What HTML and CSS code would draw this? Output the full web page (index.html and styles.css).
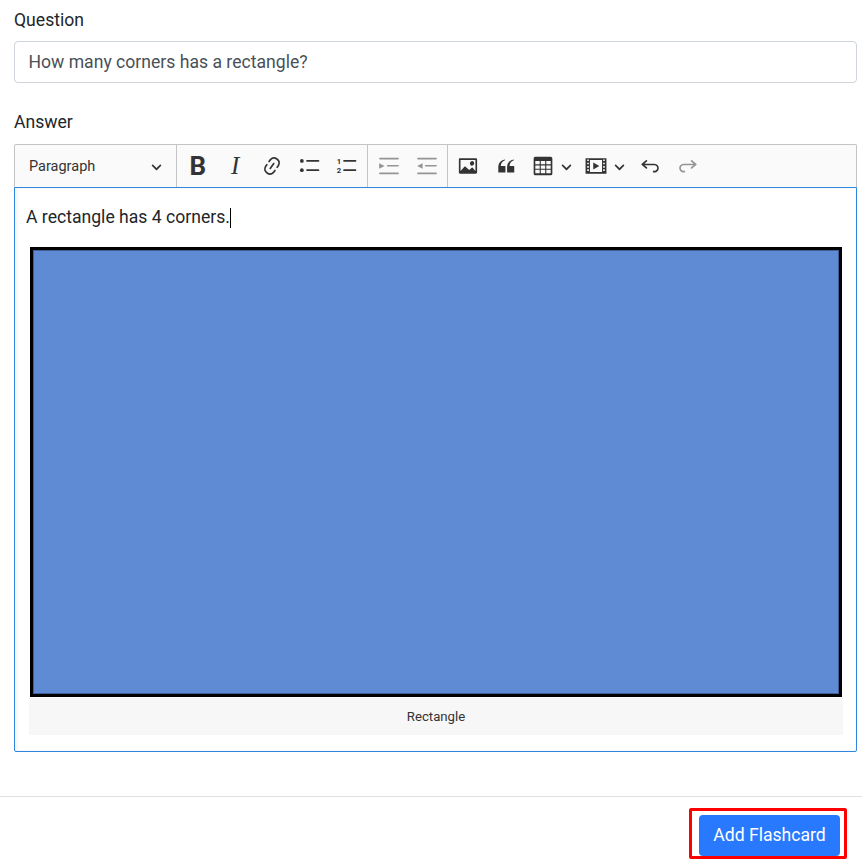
FILE: index.html
```html
<!DOCTYPE html>
<html lang="en">
<head>
    <meta charset="UTF-8">
    <meta name="viewport" content="width=device-width, initial-scale=1.0">
    <title>Add Flashcard</title>
    <link rel="stylesheet" href="styles.css">
</head>
<body>
    <form class="card-form">
        <div class="field">
            <label class="field-label" for="question">Question</label>
            <input class="text-input" type="text" id="question" value="How many corners has a rectangle?">
        </div>
        <div class="field">
            <span class="field-label">Answer</span>
            <div class="toolbar">
                <div class="heading-select">
                    <span>Paragraph</span>
                    <svg class="arrow" viewBox="0 0 10 10"><path d="M.941 4.523a.75.75 0 1 1 1.06-1.06l3.006 3.005 3.005-3.005a.75.75 0 1 1 1.06 1.06l-3.549 3.55a.75.75 0 0 1-1.062 0L.941 4.523z"/></svg>
                </div>
                <div class="tool-group">
                    <span class="tool tool-bold">B</span>
                    <span class="tool tool-italic">I</span>
                    <span class="tool">
                        <svg class="icon" viewBox="0 0 20 20"><path d="m11.077 15 .991-1.416a.75.75 0 1 1 1.229.86l-1.148 1.64a.748.748 0 0 1-.217.206 5.251 5.251 0 0 1-8.503-5.955.741.741 0 0 1 .12-.274l1.147-1.639a.75.75 0 1 1 1.228.86L4.933 10.7l.006.003a3.75 3.75 0 0 0 6.132 4.294l.006.004zm5.494-5.335a.748.748 0 0 1-.12.274l-1.147 1.639a.75.75 0 1 1-1.228-.86l.86-1.23a3.75 3.75 0 0 0-6.144-4.301l-.86 1.229a.75.75 0 0 1-1.229-.86l1.148-1.64a.748.748 0 0 1 .217-.206 5.251 5.251 0 0 1 8.503 5.955zm-4.563-2.532a.75.75 0 0 1 .184 1.045l-3.155 4.505a.75.75 0 1 1-1.229-.86l3.155-4.506a.75.75 0 0 1 1.045-.184z"/></svg>
                    </span>
                    <span class="tool">
                        <svg class="icon" viewBox="0 0 20 20"><circle cx="2.600" cy="5.400" r="1.700"/><circle cx="2.600" cy="13.800" r="1.700"/><rect x="6.500" y="4.600" width="12" height="1.500" rx=".75"/><rect x="6.500" y="13" width="12" height="1.500" rx=".75"/></svg>
                    </span>
                    <span class="tool">
                        <svg class="icon" viewBox="0 0 20 20"><text class="list-num" x="2.800" y="7.800">1</text><text class="list-num" x="2.800" y="16.600">2</text><rect x="6.500" y="4.600" width="12" height="1.500" rx=".75"/><rect x="6.500" y="13" width="12" height="1.500" rx=".75"/></svg>
                    </span>
                </div>
                <div class="tool-group">
                    <span class="tool tool-off">
                        <svg class="icon" viewBox="0 0 20 20"><rect x="1" y="2.500" width="18" height="1.500" rx=".75"/><rect x="8" y="9" width="11" height="1.500" rx=".75"/><rect x="1" y="16" width="18" height="1.500" rx=".75"/><path d="M1 7.500l5 2.500-5 2.500z"/></svg>
                    </span>
                    <span class="tool tool-off">
                        <svg class="icon" viewBox="0 0 20 20"><rect x="1" y="2.500" width="18" height="1.500" rx=".75"/><rect x="8" y="9" width="11" height="1.500" rx=".75"/><rect x="1" y="16" width="18" height="1.500" rx=".75"/><path d="M6 7.500l-5 2.500 5 2.500z"/></svg>
                    </span>
                </div>
                <div class="tool-group tool-group-last">
                    <span class="tool">
                        <svg class="icon" viewBox="0 0 20 20"><path d="M6.91 10.54c.26-.23.64-.21.88.03l3.36 3.14 2.23-2.06a.64.64 0 0 1 .87 0l2.52 2.97V4.5H3.2v10.12l3.71-4.08zm10.27-7.51c.6 0 1.09.47 1.09 1.05v11.84c0 .59-.49 1.06-1.09 1.06H2.79c-.6 0-1.09-.47-1.09-1.06V4.08c0-.58.49-1.05 1.1-1.05h14.38zm-5.22 5.56a1.96 1.96 0 1 1 3.4-1.96 1.96 1.96 0 0 1-3.4 1.96z"/></svg>
                    </span>
                    <span class="tool">
                        <svg class="icon" viewBox="0 0 20 20"><path d="M3 10.423a6.5 6.5 0 0 1 6.056-6.408l.038.67C6.448 5.423 5.354 7.663 5.22 10H9c.552 0 .5.432.5.986v4.511c0 .554-.448.503-1 .503h-5c-.552 0-.5-.449-.5-1.003v-4.574zm8 0a6.5 6.5 0 0 1 6.056-6.408l.038.67c-2.646.739-3.74 2.979-3.873 5.315H17c.552 0 .5.432.5.986v4.511c0 .554-.448.503-1 .503h-5c-.552 0-.5-.449-.5-1.003v-4.574z"/></svg>
                    </span>
                    <span class="tool tool-split">
                        <svg class="icon" viewBox="0 0 20 20"><path fill-rule="evenodd" d="M3 1.500h14A1.500 1.500 0 0 1 18.500 3v14a1.500 1.500 0 0 1-1.500 1.500H3A1.500 1.500 0 0 1 1.500 17V3A1.500 1.500 0 0 1 3 1.500zM3 5.500v3h4v-3H3zm5 0v3h4v-3H8zm5 0v3h4v-3h-4zM3 9.500v3h4v-3H3zm5 0v3h4v-3H8zm5 0v3h4v-3h-4zM3 13.500v3h4v-3H3zm5 0v3h4v-3H8zm5 0v3h4v-3h-4z"/></svg>
                        <svg class="arrow" viewBox="0 0 10 10"><path d="M.941 4.523a.75.75 0 1 1 1.06-1.06l3.006 3.005 3.005-3.005a.75.75 0 1 1 1.06 1.06l-3.549 3.55a.75.75 0 0 1-1.062 0L.941 4.523z"/></svg>
                    </span>
                    <span class="tool tool-split tool-split-media">
                        <svg class="icon" viewBox="0 0 20 20"><path fill-rule="evenodd" d="M.500 3h19v14H.500V3zM2 4v1.500h1.500V4H2zm0 3v1.500h1.500V7H2zm0 3v1.500h1.500V10H2zm0 3v1.500h1.500V13H2zm14.500-9v1.500H18V4h-1.500zm0 3v1.500H18V7h-1.500zm0 3v1.500H18V10h-1.500zm0 3v1.500H18V13h-1.500zM4.500 4.500v11h11v-11h-11zM7.500 6.800l5.500 3.200-5.500 3.200V6.800z"/></svg>
                        <svg class="arrow" viewBox="0 0 10 10"><path d="M.941 4.523a.75.75 0 1 1 1.06-1.06l3.006 3.005 3.005-3.005a.75.75 0 1 1 1.06 1.06l-3.549 3.55a.75.75 0 0 1-1.062 0L.941 4.523z"/></svg>
                    </span>
                    <span class="tool">
                        <svg class="icon" viewBox="0 0 20 20"><path d="m5.042 9.367 2.189 1.837a.75.75 0 0 1-.965 1.149l-3.788-3.18a.747.747 0 0 1-.21-.284.75.75 0 0 1 .17-.945L6.23 4.762a.75.75 0 1 1 .964 1.15L4.863 7.866h8.917A.75.75 0 0 1 14 7.9a4 4 0 1 1-1.477 7.718l.344-1.489a2.5 2.5 0 1 0 1.094-4.73l.008-.032H5.042z"/></svg>
                    </span>
                    <span class="tool tool-off">
                        <svg class="icon" viewBox="0 0 20 20"><path transform="matrix(-1 0 0 1 20 0)" d="m5.042 9.367 2.189 1.837a.75.75 0 0 1-.965 1.149l-3.788-3.18a.747.747 0 0 1-.21-.284.75.75 0 0 1 .17-.945L6.23 4.762a.75.75 0 1 1 .964 1.15L4.863 7.866h8.917A.75.75 0 0 1 14 7.9a4 4 0 1 1-1.477 7.718l.344-1.489a2.5 2.5 0 1 0 1.094-4.73l.008-.032H5.042z"/></svg>
                    </span>
                </div>
            </div>
            <div class="editor">
                <p class="editor-text">A rectangle has 4 corners.<span class="caret"></span></p>
                <figure class="editor-figure">
                    <div class="rectangle"></div>
                    <figcaption class="editor-caption">Rectangle</figcaption>
                </figure>
            </div>
        </div>
        <div class="form-footer">
            <div class="highlight">
                <button class="btn-primary" type="button">Add Flashcard</button>
            </div>
        </div>
    </form>
</body>
</html>
```

FILE: styles.css
```css
html, body {
    height: 100%;
}
body {
    font-family: Roboto, Arial, sans-serif;
    font-size: 17.6px;
    color: #212529;
    background-color: #fff;
    margin: 0;
    overflow: hidden;
}
.card-form {
    padding-top: 8px;
}
.field {
    padding: 0 5px 0 14px;
    margin-bottom: 27px;
}
.field-label {
    display: block;
    line-height: 24px;
    margin-bottom: 9px;
}
.text-input {
    display: block;
    box-sizing: border-box;
    width: 100%;
    height: 42px;
    padding: 0 13.5px;
    font-family: inherit;
    font-size: 17.6px;
    color: #495057;
    border: 1px solid #ced4da;
    border-radius: 4px;
}

/* editor toolbar */
.toolbar {
    display: flex;
    box-sizing: border-box;
    height: 43px;
    margin-top: 10px;
    background-color: #fafafa;
    border: 1px solid #c4c4c4;
    border-bottom: none;
    border-radius: 2px 2px 0 0;
    color: #333;
}
.heading-select {
    display: flex;
    align-items: center;
    justify-content: space-between;
    box-sizing: border-box;
    width: 162px;
    padding: 0 14px;
    font-size: 14.5px;
    border-right: 1px solid #c4c4c4;
}
.tool-group {
    display: flex;
    align-items: center;
    padding: 0 1.5px 0 2px;
    border-right: 1px solid #c4c4c4;
}
.tool-group-last {
    border-right: none;
}
.tool {
    display: flex;
    align-items: center;
    justify-content: center;
    width: 37.4px;
    height: 36px;
}
.tool-split {
    width: 52.5px;
    justify-content: flex-start;
    padding-left: 7.5px;
    box-sizing: border-box;
    gap: 7px;
}
.tool-split-media {
    width: 54.5px;
}
.tool-off {
    opacity: 0.5;
}
.tool-bold {
    font-size: 26px;
    font-weight: 700;
}
.tool-italic {
    font-family: "Liberation Serif", serif;
    font-size: 25px;
    font-style: italic;
}
.icon {
    flex: none;
    width: 22px;
    height: 22px;
    fill: #333;
}
.arrow {
    flex: none;
    width: 11px;
    height: 11px;
    fill: #333;
}
.list-num {
    font-family: Roboto, Arial, sans-serif;
    font-size: 7px;
    font-weight: 700;
    text-anchor: middle;
}

/* editor body */
.editor {
    box-sizing: border-box;
    height: 565px;
    padding: 0 13px 16px 14px;
    border: 1px solid #2e86de;
    border-radius: 0 0 2px 2px;
    box-shadow: inset 2px 0 3px rgba(0, 0, 0, 0.06);
}
.editor-text {
    margin: 0 0 0 -3px;
    padding-top: 17px;
    line-height: 24px;
}
.caret {
    display: inline-block;
    width: 1px;
    height: 20px;
    background-color: #000;
    vertical-align: -5px;
}
.editor-figure {
    margin: 18px 0 0;
}
.rectangle {
    box-sizing: border-box;
    height: 450px;
    margin: 0 1px 1px;
    background-color: #5f8bd4;
    border: 3px solid #000;
    box-shadow: inset 0 0 0 1px #3f5f96;
}
.editor-caption {
    height: 37px;
    line-height: 37px;
    text-align: center;
    font-size: 13.2px;
    color: #333;
    background-color: #f7f7f7;
}

/* footer */
.form-footer {
    display: flex;
    justify-content: flex-end;
    height: 65px;
    padding: 11px 15px 0 0;
    margin-top: 44px;
    box-sizing: border-box;
    border-top: 1px solid #dee2e6;
}
.highlight {
    padding: 4px 4px 0 7px;
    height: 51px;
    box-sizing: border-box;
    border: 3px solid #f00;
    border-radius: 2px;
}
.btn-primary {
    display: block;
    width: 141px;
    height: 41px;
    padding: 0 0 2px;
    font-family: inherit;
    font-size: 17.6px;
    color: #fff;
    background-color: #2979ff;
    border: none;
    border-radius: 4px;
}
```
